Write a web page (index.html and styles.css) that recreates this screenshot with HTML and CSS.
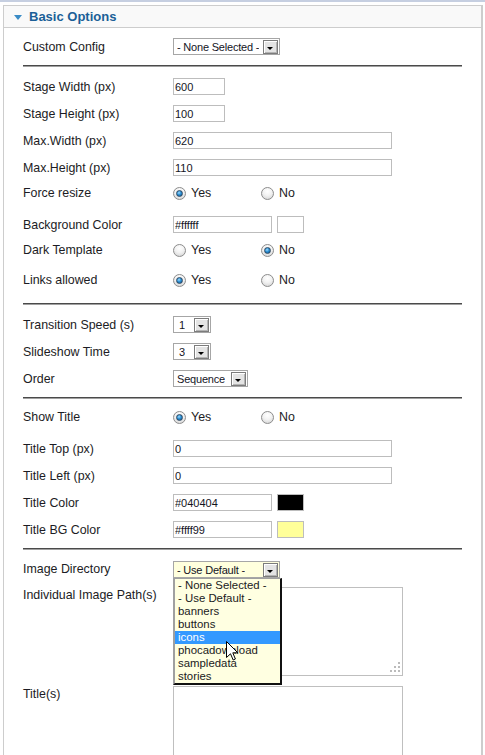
FILE: index.html
```html
<!DOCTYPE html>
<html>
<head>
<meta charset="utf-8">
<title>Basic Options</title>
<link rel="stylesheet" href="styles.css">
</head>
<body>
<div class="topbar"></div>
<div class="panel">
  <div class="panel-head"><span class="tri"></span><span class="head-title">Basic Options</span></div>
  <div class="panel-body">
    <div class="row">
      <label class="lbl">Custom Config</label>
      <div class="select w107"><span class="sel-text">- None Selected -</span><span class="sel-btn"></span></div>
    </div>
    <hr class="sep">

    <div class="row"><label class="lbl">Stage Width (px)</label><input class="inp w52" type="text" value="600"></div>
    <div class="row"><label class="lbl">Stage Height (px)</label><input class="inp w52" type="text" value="100"></div>
    <div class="row"><label class="lbl">Max.Width (px)</label><input class="inp w219" type="text" value="620"></div>
    <div class="row"><label class="lbl">Max.Height (px)</label><input class="inp w219" type="text" value="110"></div>
    <div class="row radio-row">
      <label class="lbl">Force resize</label>
      <div class="opts"><span class="opt"><span class="radio on"></span>Yes</span><span class="opt"><span class="radio"></span>No</span></div>
    </div>
    <div class="row">
      <label class="lbl">Background Color</label>
      <div class="color"><input class="inp w99" type="text" value="#ffffff"><span class="swatch sw-white"></span></div>
    </div>
    <div class="row radio-row">
      <label class="lbl">Dark Template</label>
      <div class="opts"><span class="opt"><span class="radio"></span>Yes</span><span class="opt"><span class="radio on"></span>No</span></div>
    </div>
    <div class="row radio-row">
      <label class="lbl">Links allowed</label>
      <div class="opts"><span class="opt"><span class="radio on"></span>Yes</span><span class="opt"><span class="radio"></span>No</span></div>
    </div>
    <hr class="sep">

    <div class="row">
      <label class="lbl">Transition Speed (s)</label>
      <div class="select w38"><span class="sel-text t1">1</span><span class="sel-btn"></span></div>
    </div>
    <div class="row">
      <label class="lbl">Slideshow Time</label>
      <div class="select w38"><span class="sel-text t1">3</span><span class="sel-btn"></span></div>
    </div>
    <div class="row">
      <label class="lbl">Order</label>
      <div class="select w75"><span class="sel-text">Sequence</span><span class="sel-btn"></span></div>
    </div>
    <hr class="sep">

    <div class="row radio-row">
      <label class="lbl">Show Title</label>
      <div class="opts"><span class="opt"><span class="radio on"></span>Yes</span><span class="opt"><span class="radio"></span>No</span></div>
    </div>
    <div class="row"><label class="lbl">Title Top (px)</label><input class="inp w219" type="text" value="0"></div>
    <div class="row"><label class="lbl">Title Left (px)</label><input class="inp w219" type="text" value="0"></div>
    <div class="row">
      <label class="lbl">Title Color</label>
      <div class="color"><input class="inp w99" type="text" value="#040404"><span class="swatch sw-black"></span></div>
    </div>
    <div class="row">
      <label class="lbl">Title BG Color</label>
      <div class="color"><input class="inp w99" type="text" value="#ffff99"><span class="swatch sw-yellow"></span></div>
    </div>
    <hr class="sep">

    <div class="row top-row">
      <label class="lbl">Image Directory</label>
      <div class="select-wrap">
        <div class="select w107 yellow"><span class="sel-text">- Use Default -</span><span class="sel-btn"></span></div>
        <ul class="droplist">
          <li>- None Selected -</li>
          <li>- Use Default -</li>
          <li>banners</li>
          <li>buttons</li>
          <li class="hl">icons</li>
          <li>phocadownload</li>
          <li>sampledata</li>
          <li>stories</li>
          <li class="cursor-holder"><svg class="cursor" width="13" height="20" viewBox="0 0 13 20"><path d="M0.5 0.5 L0.5 16.5 L4.5 12.8 L7.2 19 L9.4 18 L6.8 11.8 L11.8 11.8 Z" fill="#fff" stroke="#000" stroke-width="1" stroke-linejoin="miter"/></svg></li>
        </ul>
      </div>
    </div>
    <div class="row tall">
      <label class="lbl">Individual Image Path(s)</label>
      <div class="ta-wrap"><textarea class="ta ta-paths"></textarea><span class="grip"></span></div>
    </div>
    <div class="row tall">
      <label class="lbl">Title(s)</label>
      <div class="ta-wrap"><textarea class="ta ta-titles"></textarea></div>
    </div>
  </div>
</div>
</body>
</html>
```

FILE: styles.css
```css
html, body {
  margin: 0;
  padding: 0;
  overflow: hidden;
  background: #fff;
}
body {
  font-family: "Liberation Sans", Arial, sans-serif;
  color: #1c1c24;
}
.topbar {
  height: 2px;
  background: #c6cfe1;
}
.panel {
  margin: 3px 0 0 3px;
  width: 480px;
  box-sizing: border-box;
  border: 1px solid #cdcdcd;
  border-right: 2px solid #cdcdcd;
  border-bottom: none;
  height: 760px;
}
.panel-head {
  height: 21px;
  background: #f9f9f9;
  border-bottom: 1px solid #cdcdcd;
  display: flex;
  align-items: center;
}
.tri {
  width: 0;
  height: 0;
  border-left: 4px solid transparent;
  border-right: 4px solid transparent;
  border-top: 5px solid #3a8bc6;
  margin: 1px 7px 0 10px;
}
.head-title {
  font-size: 13px;
  font-weight: bold;
  color: #1b5f97;
}
.panel-body {
  padding: 10px 19px 0 19px;
}
.row {
  display: grid;
  grid-template-columns: 150px auto;
  align-items: center;
  justify-items: start;
  height: 17px;
  margin-bottom: 10px;
}
.lbl {
  font-size: 12.4px;
  line-height: 14px;
}
.radio-row {
  height: 20px;
  align-items: start;
}
.top-row {
  height: 16px;
  align-items: start;
  position: relative;
  z-index: 2;
}
.top-row .lbl {
  padding-top: 1px;
}
.tall {
  height: auto;
  align-items: start;
}
.tall .lbl {
  padding-top: 1px;
}
.sep {
  height: 0;
  border: 0;
  border-top: 1px solid #4a4a4a;
  border-bottom: 1px solid #a0a0a0;
  margin: 0 0 11px 0;
}
.inp {
  box-sizing: border-box;
  height: 17px;
  border: 1px solid #bdbdbd;
  font-family: "Liberation Sans", Arial, sans-serif;
  font-size: 11px;
  padding: 0 1px;
  margin: 0;
  color: #14141e;
  background: #fff;
  outline: none;
}
.w52 { width: 52px; }
.w219 { width: 219px; }
.w99 { width: 99px; }
.color {
  display: flex;
  gap: 5px;
}
.swatch {
  box-sizing: border-box;
  width: 27px;
  height: 17px;
  border: 1px solid #bdbdbd;
}
.sw-white { background: #fff; }
.sw-black { background: #000; }
.sw-yellow { background: #ffff99; }
.opts {
  display: flex;
  height: 14px;
  align-items: center;
  font-size: 12.4px;
  line-height: 14px;
}
.opt {
  display: flex;
  align-items: center;
  gap: 5px;
  width: 88px;
}
.radio {
  box-sizing: border-box;
  width: 13px;
  height: 13px;
  border-radius: 50%;
  border: 1px solid #8c8c8c;
  background: radial-gradient(circle at 50% 30%, #ffffff 0, #f2f2f2 45%, #cfcfcf 100%);
  position: relative;
  flex: none;
}
.radio.on::after {
  content: "";
  position: absolute;
  left: 2px;
  top: 2px;
  width: 7px;
  height: 7px;
  box-sizing: border-box;
  border-radius: 50%;
  border: 1px solid #2f4a63;
  background: radial-gradient(circle at 40% 35%, #9fdcff 0, #2b8ed2 45%, #0d4f86 100%);
}
.select {
  box-sizing: border-box;
  height: 17px;
  border: 1px solid #a6a6a6;
  background: #fff;
  display: flex;
  align-items: center;
  justify-content: space-between;
  padding: 0 1px 0 3px;
  font-size: 11px;
}
.select.yellow {
  background: #ffffdd;
}
.w107 { width: 107px; }
.w38 { width: 38px; }
.w75 { width: 75px; }
.sel-text {
  white-space: nowrap;
  color: #14141e;
  letter-spacing: -0.2px;
  overflow: hidden;
}
.sel-text.t1 {
  padding-left: 2px;
}
.sel-btn {
  box-sizing: border-box;
  width: 15px;
  height: 14px;
  border: 1px solid #7c7c7c;
  background: #e4e4e4;
  box-shadow: inset 1px 1px 0 #ffffff, inset -1px -1px 0 #b4b4b4;
  position: relative;
  flex: none;
}
.sel-btn::after {
  content: "";
  position: absolute;
  left: 3px;
  top: 6px;
  width: 0;
  height: 0;
  border-left: 3px solid transparent;
  border-right: 3px solid transparent;
  border-top: 3px solid #000;
}
.select-wrap {
  position: relative;
}
.droplist {
  position: absolute;
  left: 0;
  top: 17px;
  width: 109px;
  box-sizing: border-box;
  margin: 0;
  padding: 0;
  list-style: none;
  background: #ffffe1;
  border-left: 2px solid #a0a0a0;
  border-top: 1px solid #a0a0a0;
  border-right: 2px solid #111;
  border-bottom: 2px solid #111;
  font-size: 11.4px;
}
.droplist li {
  height: 13px;
  line-height: 13px;
  padding-left: 3px;
  color: #1a1a22;
  white-space: nowrap;
}
.droplist li.hl {
  background: #3399ff;
  color: #fff;
}
.droplist li.cursor-holder {
  height: 0;
  padding: 0;
}
.cursor {
  position: absolute;
  left: 51px;
  top: 62px;
}
.ta-wrap {
  position: relative;
}
.ta {
  display: block;
  box-sizing: border-box;
  width: 230px;
  margin: 0;
  border: 1px solid #bfbfbf;
  background: #fff;
  resize: none;
  outline: none;
}
.ta-paths { height: 89px; margin-bottom: 0; }
.ta-titles { height: 100px; }
.grip {
  position: absolute;
  right: 3px;
  bottom: 4px;
  width: 2px;
  height: 2px;
  background: #bbbbbb;
  box-shadow: -4px 0 0 #bbbbbb, -8px 0 0 #bbbbbb, 0 -4px 0 #bbbbbb, -4px -4px 0 #bbbbbb, 0 -8px 0 #bbbbbb;
}
```
